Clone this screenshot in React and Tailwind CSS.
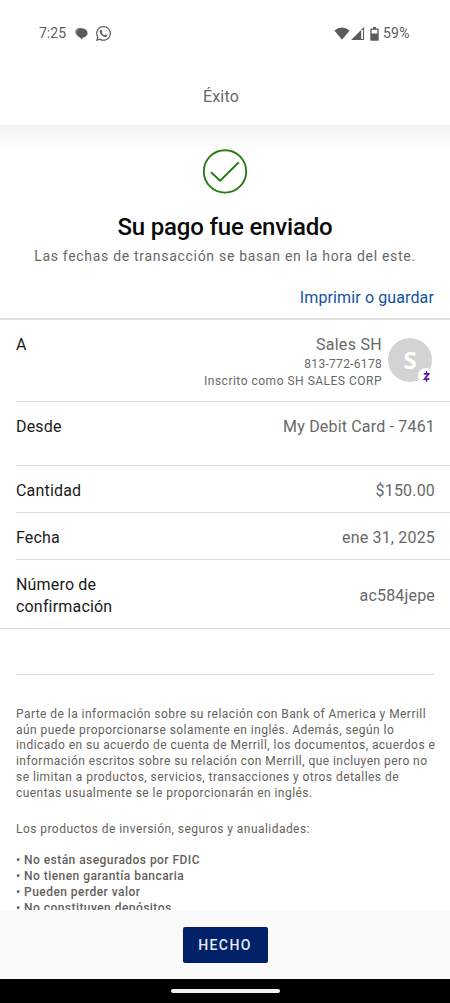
import clsx from 'clsx'
import { FaWhatsapp } from 'react-icons/fa'

const disclosures = [
  'No están asegurados por FDIC',
  'No tienen garantía bancaria',
  'Pueden perder valor',
  'No constituyen depósitos',
]

const notice = [
  'Parte de la información sobre su relación con Bank of America y Merrill',
  'aún puede proporcionarse solamente en inglés. Además, según lo',
  'indicado en su acuerdo de cuenta de Merrill, los documentos, acuerdos e',
  'información escritos sobre su relación con Merrill, que incluyen pero no',
  'se limitan a productos, servicios, transacciones y otros detalles de',
  'cuentas usualmente se le proporcionarán en inglés.',
]

function StatusBar() {
  return (
    <div className="flex h-[67px] items-center justify-between pr-10 pl-[39px] text-[14px] text-[#5c5c5c]">
      <div className="flex items-center">
        <span className="w-[27px] whitespace-nowrap">7:25</span>
        <svg viewBox="0 0 14 14" className="ml-[9px] h-[14px] w-[14px]">
          <ellipse cx="5" cy="4.8" rx="4.9" ry="4.1" fill="#8a8a8a" />
          <ellipse cx="7" cy="6" rx="5.6" ry="4.5" fill="#5c5c5c" />
          <path d="M4 9.6 L7 12.6 L8.4 9.8 Z" fill="#5c5c5c" />
        </svg>
        <FaWhatsapp className="ml-[6px] h-[17px] w-[17px]" />
      </div>
      <div className="flex items-center">
        <svg viewBox="0 0 16 13" className="h-[13px] w-4 fill-[#5c5c5c]">
          <path d="M0.3 3.6 Q8 -2.8 15.7 3.6 L8 12.8 Z" />
        </svg>
        <svg viewBox="0 0 13 13" className="ml-px h-[13px] w-[13px] fill-[#5c5c5c]">
          <path d="M13 0 V13 H0 Z M12 3 H10.2 V12 H12 Z" fillRule="evenodd" />
        </svg>
        <svg viewBox="0 0 9 14" className="ml-[6px] h-[14px] w-[9px] fill-[#5c5c5c]">
          <path d="M3 0 H6 V1.5 H8 Q8.7 1.5 8.7 2.2 V13 Q8.7 13.8 8 13.8 H1 Q0.3 13.8 0.3 13 V2.2 Q0.3 1.5 1 1.5 H3 Z M1.7 2.8 V6.5 H7.3 V2.8 Z" fillRule="evenodd" />
        </svg>
        <span className="ml-1 w-[27px] whitespace-nowrap tracking-[0.2px]">59%</span>
      </div>
    </div>
  )
}

function Row({ label, value, className }) {
  return (
    <div className={clsx('ml-4 flex justify-between border-b border-[#dcdcdc] pr-[15px]', className)}>
      <dt className="w-[120px] text-[#1a1a1a]">{label}</dt>
      <dd className="whitespace-nowrap text-[#686868]">{value}</dd>
    </div>
  )
}

function Recipient() {
  return (
    <div className="ml-4 flex h-[82px] justify-between border-b border-[#dcdcdc] pt-[14px] pr-[18px]">
      <dt className="text-[#1a1a1a]">A</dt>
      <dd className="flex text-[#686868]">
        <div className="text-right whitespace-nowrap">
          <p className="tracking-[0.3px]">Sales SH</p>
          <p className="text-[12px] leading-[17px] tracking-[0.3px]">813-772-6178</p>
          <p className="text-[12px] leading-[17px] tracking-[0.5px]">Inscrito como SH SALES CORP</p>
        </div>
        <div className="relative mt-[4px] ml-1.5 flex size-11 items-center justify-center rounded-full bg-[#d3d3d3] font-['Open_Sans'] text-[24px] font-bold tracking-normal text-white">
          S
          <span className="absolute top-[30px] left-[30px] flex size-4 items-center justify-center rounded-full bg-white">
            <svg viewBox="0 0 10 14" className="h-[13px] w-[9px] fill-none stroke-[#5f1a9e]" strokeWidth="1.9">
              <path d="M2 4 H7.4 L2.8 10 H8.2" />
              <path d="M5 1 V4 M5 10 V13" strokeWidth="1.6" />
            </svg>
          </span>
        </div>
      </dd>
    </div>
  )
}

export default function App() {
  return (
    <div className="flex h-[1003px] w-[450px] flex-col overflow-hidden bg-white font-[Roboto,sans-serif]">
      <header className="h-[125px] shrink-0">
        <StatusBar />
        <h1 className="pt-[18px] pr-[8px] text-center text-[16px] leading-6 tracking-[0.2px] text-[#686868]">Éxito</h1>
      </header>

      <main className="h-[785px] shrink-0 overflow-hidden bg-linear-to-b from-[#f4f4f4] to-white to-[28px]">
        <section className="flex h-[195px] flex-col items-center border-b-2 border-[#e4e4e4] pt-6">
          <svg viewBox="0 0 46 46" className="size-[46px] fill-none stroke-[#277b12]" strokeWidth="1.9">
            <circle cx="23" cy="22.4" r="21.2" />
            <path d="M9 23.2 L18.2 31.6 L36.8 13.2" />
          </svg>
          <h2 className="mt-[17px] text-[24px] leading-[30px] font-medium tracking-[-0.18px] text-[#0a0a0a]">Su pago fue enviado</h2>
          <p className="mt-[4px] text-[14px] leading-5 tracking-[0.7px] whitespace-nowrap text-[#686868]">
            Las fechas de transacción se basan en la hora del este.
          </p>
          <a href="#guardar" className="mt-[21px] mr-4 self-end text-[16px] leading-[22px] tracking-[0.12px] text-[#10539f]">
            Imprimir o guardar
          </a>
        </section>

        <dl className="border-b border-[#dcdcdc] text-[16px] leading-[22px] tracking-[0.18px]">
          <Recipient />
          <Row label="Desde" value="My Debit Card - 7461" className="h-16 pt-[14px]" />
          <Row label="Cantidad" value="$150.00" className="h-[47px] items-center pt-[3px]" />
          <Row label="Fecha" value="ene 31, 2025" className="h-[47px] items-center pt-[3px]" />
          <Row label="Número de confirmación" value="ac584jepe" className="h-[68px] items-center border-b-0 pt-[4px]" />
        </dl>

        <div className="mx-4 h-[46px] border-b border-[#dcdcdc]" />

        <section className="px-4 pt-8 text-[12px] leading-[15.7px] tracking-[0.45px] text-[#65615b]">
          <p>
            {notice.map((line) => (
              <span key={line} className="block whitespace-nowrap">{line}</span>
            ))}
          </p>
          <p className="mt-[21px]">Los productos de inversión, seguros y anualidades:</p>
          <ul className="mt-[15.5px] font-medium">
            {disclosures.map((item) => (
              <li key={item}>• {item}</li>
            ))}
          </ul>
        </section>
      </main>

      <footer className="flex h-[69px] shrink-0 items-center justify-center bg-[#fafafa]">
        <button className="h-9 w-[85px] rounded-[2px] bg-[#012169] pt-0.5 text-[14px] font-medium tracking-[1.4px] text-[#e6eaf5]">
          HECHO
        </button>
      </footer>
      <div className="flex h-6 shrink-0 items-center justify-center bg-black">
        <div className="h-1 w-[109px] rounded-full bg-[#f2f0f1]" />
      </div>
    </div>
  )
}
